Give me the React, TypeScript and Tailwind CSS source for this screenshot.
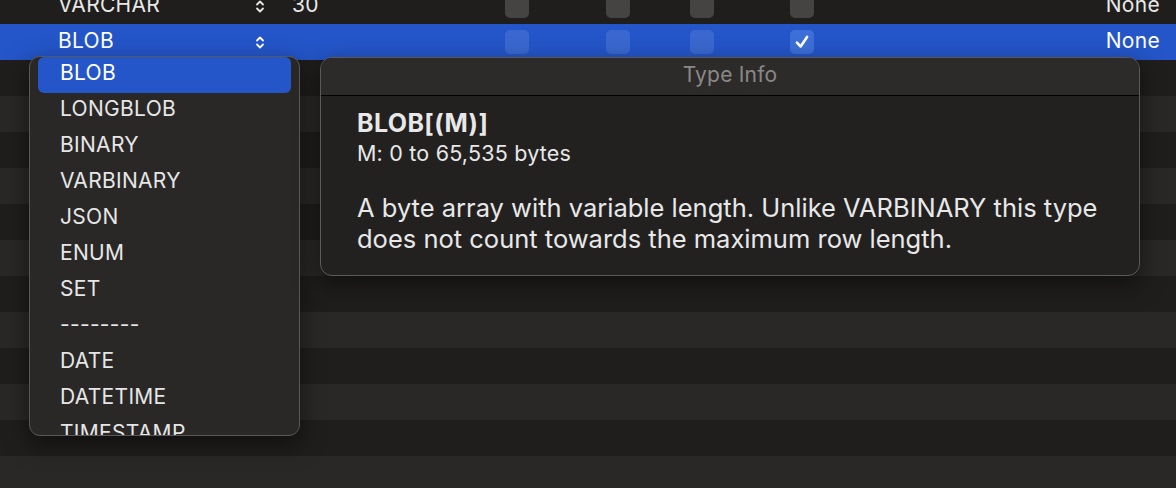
import React from 'react'

const font = { fontFamily: 'Inter, "Noto Sans", sans-serif' }

type Row = { type?: string; length?: string; checks?: boolean[]; def?: string; selected?: boolean }

const rows: Row[] = [
  { type: 'VARCHAR', length: '30', checks: [false, false, false, false], def: 'None' },
  { type: 'BLOB', checks: [false, false, false, true], def: 'None', selected: true },
  {}, {}, {}, {}, {}, {}, {}, {}, {}, {}, {}, {},
]

const menuItems = [
  'BLOB', 'LONGBLOB', 'BINARY', 'VARBINARY', 'JSON', 'ENUM', 'SET', '--------', 'DATE', 'DATETIME', 'TIMESTAMP',
]

function Stepper() {
  return (
    <svg width="10" height="15" viewBox="0 0 10 15" fill="none" stroke="currentColor" strokeWidth="1.8" strokeLinecap="round" strokeLinejoin="round">
      <path d="M2 5.5 L5 2.5 L8 5.5" />
      <path d="M2 9.5 L5 12.5 L8 9.5" />
    </svg>
  )
}

function Check({ on, selected }: { on: boolean; selected?: boolean }) {
  const bg = on ? 'bg-[#3d6fd9]' : selected ? 'bg-[#3a68d0]' : 'bg-[#454443]'
  return (
    <div className={`w-6 h-6 rounded-[5px] flex items-center justify-center ${bg}`}>
      {on && (
        <svg width="18" height="18" viewBox="0 0 16 16" fill="none" stroke="white" strokeWidth="2.3" strokeLinecap="round" strokeLinejoin="round">
          <path d="M3.5 8.5 L6.8 12 L12.5 3.5" />
        </svg>
      )}
    </div>
  )
}

function TableRow({ row, index }: { row: Row; index: number }) {
  const stripe = row.selected ? 'bg-[#2456c9]' : index % 2 === 0 ? 'bg-[#1f1e1d]' : 'bg-[#2a2827]'
  return (
    <div className={`flex items-center h-9 shrink-0 text-[21px] tracking-[0.3px] ${stripe} ${row.selected ? 'text-white' : 'text-[#e8e8e8]'}`}>
      {row.type && (
        <>
          <div className="w-[250px] pl-[58px] pb-[3px]">{row.type}</div>
          <div className="w-[42px] pl-[5px] flex items-center">
            <Stepper />
          </div>
          <div className="w-[213px] pb-[3px]">{row.length ?? ''}</div>
          <Check on={row.checks![0]} selected={row.selected} />
          <div className="w-[77px]" />
          <Check on={row.checks![1]} selected={row.selected} />
          <div className="w-[60px]" />
          <Check on={row.checks![2]} selected={row.selected} />
          <div className="w-[76px]" />
          <Check on={row.checks![3]} selected={row.selected} />
          <div className="flex-1 text-right pr-[16px] pb-[3px]">{row.def}</div>
        </>
      )}
    </div>
  )
}

export default function App() {
  return (
    <div className="relative w-[1176px] h-[488px] overflow-hidden bg-[#1f1e1d]" style={font}>
      <div className="flex flex-col -mt-[12px]">
        {rows.map((r, i) => (
          <TableRow key={i} row={r} index={i} />
        ))}
      </div>

      {/* type dropdown */}
      <div className="absolute left-[29px] top-[56px] w-[271px] h-[380px] rounded-[11px] border border-[#5a5856] bg-[#2a2826] overflow-hidden shadow-[0_8px_24px_rgba(0,0,0,0.5)]">
        <div className="flex flex-col px-[8px]">
          {menuItems.map((m, i) => (
            <div
              key={m}
              className={`h-9 shrink-0 flex items-center pl-[22px] pb-[4px] rounded-[6px] text-[21px] tracking-[0.3px] ${i === 0 ? 'bg-[#2456c9] text-white' : 'text-[#e6e6e6]'}`}
            >
              {m}
            </div>
          ))}
        </div>
      </div>

      {/* type info popover */}
      <div className="absolute left-[320px] top-[57px] w-[820px] h-[219px] rounded-[12px] border border-[#5c5a58] bg-[#222120] overflow-hidden shadow-[0_8px_24px_rgba(0,0,0,0.5)] flex flex-col">
        <div className="h-[38px] shrink-0 bg-[#2d2b29] border-b border-black flex items-center justify-center pb-[3px] text-[21px] tracking-[0.2px] text-[#8a8988]">
          Type Info
        </div>
        <div className="pl-[36px] pt-[14px] text-[#e8e8e8]">
          <div className="text-[25px] font-bold leading-[26px] tracking-[0.4px]">BLOB[(M)]</div>
          <div className="text-[21.5px] leading-[22px] mt-[6px] tracking-[0.2px]">M: 0 to 65,535 bytes</div>
          <div className="text-[25.5px] leading-[31px] mt-[28px]">
            A byte array with variable length. Unlike VARBINARY this type
            <br />
            does not count towards the maximum row length.
          </div>
        </div>
      </div>
    </div>
  )
}
